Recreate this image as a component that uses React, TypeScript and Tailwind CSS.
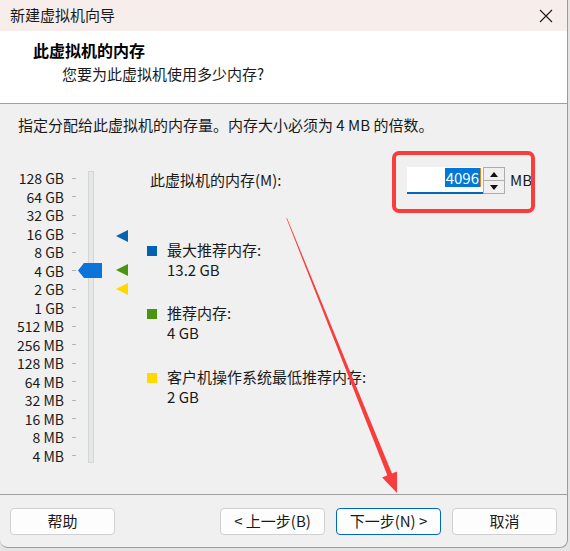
const font = { fontFamily: '"Noto Sans CJK SC", "Noto Sans", sans-serif' }

const sizes = [
  '128 GB', '64 GB', '32 GB', '16 GB', '8 GB', '4 GB', '2 GB', '1 GB',
  '512 MB', '256 MB', '128 MB', '64 MB', '32 MB', '16 MB', '8 MB', '4 MB',
]

function Marker({ color, top }: { color: string; top: number }) {
  return (
    <svg className="absolute left-[116px]" style={{ top }} width="12" height="12" viewBox="0 0 12 12">
      <polygon points="0,6 12,0 12,12" fill={color} />
    </svg>
  )
}

function MemorySlider() {
  return (
    <div className="relative flex w-[130px] shrink-0">
      <div className="flex flex-col">
        {sizes.map((s) => (
          <div key={s} className="flex h-[18.5px] items-center">
            <span className="w-[64px] text-right text-[14px] leading-none text-[#1a1a1a]">{s}</span>
            <span className="ml-[8px] h-px w-[4px] bg-[#b4b4b4]" />
          </div>
        ))}
      </div>
      <div className="ml-[12px] mt-[2px] h-[292px] w-[6px] border border-[#d4d6d6] bg-[#e6e7e7]" />
      {/* thumb */}
      <svg className="absolute left-[78px] top-[94px]" width="24" height="15" viewBox="0 0 24 15">
        <polygon points="0,7.5 6,0 24,0 24,15 6,15" fill="#0a74da" />
      </svg>
      <Marker color="#0a63ad" top={61} />
      <Marker color="#4a9410" top={95} />
      <Marker color="#ffd800" top={114} />
    </div>
  )
}

function LegendItem({ color, label, value, className }: { color: string; label: string; value: string; className: string }) {
  return (
    <div className={`flex ${className}`}>
      <span className="mt-[6px] h-[10px] w-[10px] shrink-0" style={{ backgroundColor: color }} />
      <div className="ml-[10px] flex flex-col text-[15px] leading-[20px] text-[#1a1a1a]">
        <span>{label}</span>
        <span>{value}</span>
      </div>
    </div>
  )
}

function Button({ children, primary }: { children: React.ReactNode; primary?: boolean }) {
  return (
    <button
      className={`flex h-[27px] w-[105px] items-center justify-center rounded-[4px] border bg-[#fdfdfd] text-[15px] text-[#1a1a1a] ${
        primary ? 'border-[#0067c0]' : 'border-[#d0d0d0]'
      }`}
    >
      {children}
    </button>
  )
}

export default function App() {
  return (
    <div className="relative h-[551px] w-[570px] overflow-hidden bg-[#e4e4e4]" style={font}>
      <div className="flex h-[548px] w-[568px] flex-col overflow-hidden rounded-b-[8px] border-r border-b border-[#9c9c9c] bg-[#f0f0f0]">
        {/* title bar */}
        <div className="flex h-[31px] shrink-0 items-center justify-between bg-[#f7eeec] pl-[10px] pr-[14px]">
          <span className="text-[15px] text-[#1a1a1a]">新建虚拟机向导</span>
          <svg width="14" height="14" viewBox="0 0 14 14">
            <path d="M1 1 L13 13 M13 1 L1 13" stroke="#1a1a1a" strokeWidth="1.1" />
          </svg>
        </div>

        {/* header */}
        <div className="h-[73px] shrink-0 border-b border-[#a0a0a0] bg-white">
          <div className="pl-[33px] pt-[9px] text-[16px] font-bold leading-[20px] text-black">此虚拟机的内存</div>
          <div className="pl-[62px] pt-[4px] text-[15px] leading-[20px] text-[#1a1a1a]">您要为此虚拟机使用多少内存?</div>
        </div>

        {/* body */}
        <div className="flex flex-1 flex-col">
          <div className="pl-[18px] pt-[11px] text-[15px] leading-[20px] text-[#1a1a1a]">
            指定分配给此虚拟机的内存量。内存大小必须为 4 MB 的倍数。
          </div>
          <div className="mt-[34px] flex">
            <MemorySlider />
            <div className="-mt-[2px] ml-[17px] flex flex-col">
              <div className="flex h-[27px] items-center">
                <span className="w-[260px] pl-[3px] text-[15px] text-[#1a1a1a]">此虚拟机的内存(M):</span>
                <div className="flex h-[27px] w-[76px] items-start justify-end border-b-2 border-[#0067c0] bg-white pr-[2px] pt-[1px]">
                  <span className="bg-[#0078d7] px-px text-[15px] leading-[19px] text-white">4096</span>
                  <span className="h-[19px] w-px bg-[#e8811a]" />
                </div>
                <div className="flex h-[27px] w-[22px] flex-col">
                  <div className="flex flex-1 items-center justify-center border border-[#adadad] bg-[#f0f0f0]">
                    <svg width="8" height="5" viewBox="0 0 8 5"><polygon points="0,5 4,0 8,5" fill="#111" /></svg>
                  </div>
                  <div className="flex flex-1 items-center justify-center border border-t-0 border-[#adadad] bg-[#f0f0f0]">
                    <svg width="8" height="5" viewBox="0 0 8 5"><polygon points="0,0 8,0 4,5" fill="#111" /></svg>
                  </div>
                </div>
                <span className="ml-[5px] text-[15px] text-[#1a1a1a]">MB</span>
              </div>
              <LegendItem className="mt-[46px]" color="#0063b1" label="最大推荐内存:" value="13.2 GB" />
              <LegendItem className="mt-[23px]" color="#4a9410" label="推荐内存:" value="4 GB" />
              <LegendItem className="mt-[24px]" color="#ffd800" label="客户机操作系统最低推荐内存:" value="2 GB" />
            </div>
          </div>
        </div>

        {/* footer */}
        <div className="flex h-[53px] shrink-0 items-start border-t border-[#a0a0a0] pl-[10px] pt-[13px]">
          <Button>帮助</Button>
          <div className="ml-[105px] flex gap-[11px]">
            <Button>&lt; 上一步(B)</Button>
            <Button primary>下一步(N) &gt;</Button>
            <Button>取消</Button>
          </div>
        </div>
      </div>

      {/* annotation overlay */}
      <svg className="pointer-events-none absolute left-0 top-0" width="570" height="551" viewBox="0 0 570 551">
        <rect x="394" y="153" width="139" height="58" rx="5" fill="none" stroke="#f93c3c" strokeWidth="4" />
        <polygon
          points="287,218 392,473.5 397,471.4 397,493 382.2,477.4 387.3,475.3 286.4,218.3"
          fill="#f93c3c"
        />
      </svg>
    </div>
  )
}
